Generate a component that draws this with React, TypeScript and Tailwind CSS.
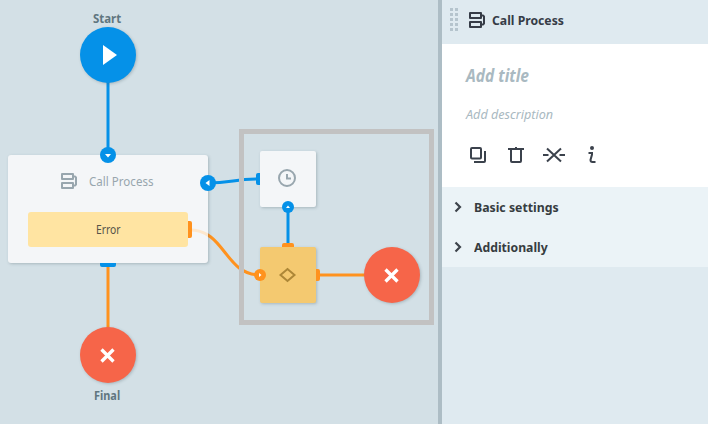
import type { ReactNode } from "react";

const font = "font-['Noto_Sans','Open_Sans',sans-serif]";

function ProcessIcon() {
  return (
    <svg width="16" height="16" viewBox="0 0 16 16" fill="none" stroke="currentColor" strokeWidth="2" strokeLinejoin="round" className="block shrink-0">
      <rect x="1" y="1" width="11" height="5" />
      <rect x="1" y="10" width="11" height="5" />
      <path d="M12 3.4h2l1 1v7.200l-1 1h-2" />
    </svg>
  );
}

function Cross() {
  return (
    <svg width="16" height="16" viewBox="0 0 16 16" className="block -translate-x-[0.500px] translate-y-[0.500px]">
      <path d="M2 2l12 12M14 2L2 14" stroke="#fff" strokeWidth="3.3" />
    </svg>
  );
}

function FinalNode({ place }: { place: string }) {
  return (
    <div className={`absolute flex h-14 w-14 items-center justify-center rounded-full bg-[#f66549] shadow-[1px_1px_3px_rgba(70,90,100,0.3)] ${place}`}>
      <Cross />
    </div>
  );
}

function Canvas() {
  return (
    <main className="relative h-full w-[438px] shrink-0 overflow-hidden bg-[#d3e0e6]">
      <svg width="438" height="424" className="absolute inset-0" fill="none" strokeWidth="3">
        <path d="M108 80V150M207 183C232 183 234 179 258 179M288 207V247" stroke="#0591e8" />
        <path d="M108 264V330M190 230C225 230 225 275 260 275M316 275H366" stroke="#ff921e" />
      </svg>
      <div className="absolute left-[239px] top-[129px] h-[196px] w-[195px] border-5 border-[#c2c2c2]" />

      <span className="absolute left-[93px] top-[9px] origin-left scale-x-[0.88] text-[13px] leading-[18px] font-bold text-[#60767f]">Start</span>
      <div className="absolute left-20 top-[27px] flex h-14 w-14 items-center justify-center rounded-full bg-[#0591e8] shadow-[1px_1px_3px_rgba(70,90,100,0.3)]">
        <svg width="56" height="56"><path d="M23 18v20l14-10z" fill="#fff" /></svg>
      </div>

      <section className="absolute left-2 top-[155px] flex h-[108px] w-[200px] flex-col rounded-[3px] bg-[#f4f6f8] px-5 shadow-[1px_1px_3px_rgba(70,90,100,0.3)]">
        <div className="flex h-[57px] items-start pl-[33px] pt-[18px] text-[#98a6ae]">
          <ProcessIcon />
          <span className="ml-[12px] origin-left scale-x-[0.89] text-[13px] leading-[17px] whitespace-nowrap">Call Process</span>
        </div>
        <div className="flex h-[35px] items-center justify-center rounded-[3px] bg-[#ffe4a2] text-[#555349]">
          <span className="scale-x-[0.86] text-[12px]">Error</span>
        </div>
      </section>

      <div className="absolute left-[260px] top-[151px] flex h-14 w-14 items-center justify-center rounded-[2px] bg-[#f4f6f8] shadow-[1px_1px_3px_rgba(70,90,100,0.3)]">
        <svg width="18" height="18" fill="none" stroke="#98a6ae" strokeWidth="2" className="-translate-x-[1px] -translate-y-[1px]"><circle cx="9" cy="9" r="8" /><path d="M9 5v4.500h4" /></svg>
      </div>
      <div className="absolute left-[260px] top-[247px] flex h-14 w-14 items-center justify-center rounded-[2px] bg-[#f4c970] shadow-[1px_1px_3px_rgba(70,90,100,0.3)]">
        <svg width="18" height="16" fill="none" stroke="#ad8737" strokeWidth="2" className="-translate-x-[0.500px]"><path d="M2 8l7-6 7 6-7 6z" /></svg>
      </div>
      <FinalNode place="left-[364px] top-[247px]" />
      <FinalNode place="left-20 top-[327px]" />
      <span className="absolute left-[94px] top-[386px] origin-left scale-x-[0.84] text-[13px] leading-[18px] font-bold text-[#60767f]">Final</span>

      <svg width="438" height="424" className="absolute inset-0">
        <clipPath id="card"><path d="M190 212h18v50h-18z" /></clipPath>
        <path d="M190 230C225 230 225 275 260 275" fill="none" stroke="#fde7cd" strokeWidth="3" clipPath="url(#card)" />
        <g fill="#0591e8">
          <circle cx="108" cy="155" r="8" />
          <circle cx="208" cy="183" r="8" />
          <circle cx="288" cy="207" r="6" />
          <path d="M100 263h16v2q0 2-2 2h-12q-2 0-2-2z" />
          <path d="M260 173h-2q-2 0-2 2v8q0 2 2 2h2z" />
        </g>
        <g fill="#ff921e">
          <path d="M188 221h2q2 0 2 2v13q0 2-2 2h-2zM316 269h2q2 0 2 2v8q0 2-2 2h-2zM282 247v-2q0-2 2-2h8q2 0 2 2v2z" />
          <circle cx="260" cy="275" r="6" />
        </g>
        <path d="M105 154h6l-3 3.500zM209.500 180v6l-4-3zM286 208h4l-2-2.500zM259 273v4l2.500-2z" fill="#fff" />
      </svg>
    </main>
  );
}

function Action({ children }: { children: ReactNode }) {
  return (
    <button className="flex h-6 w-[38px] items-center justify-center">
      <svg width="24" height="24" fill="none" stroke="#3b424c" strokeWidth="2">{children}</svg>
    </button>
  );
}

function Setting({ title, scale }: { title: string; scale: string }) {
  return (
    <div className="flex h-10 items-center pl-3 text-[#363c40]">
      <svg width="8" height="12" className="block" fill="none" stroke="#3e444b" strokeWidth="2.2"><path d="M1.500 1.500L6 6l-4.500 4.500" /></svg>
      <span className={`ml-3 mt-px origin-left text-[13px] font-bold whitespace-nowrap ${scale}`}>{title}</span>
    </div>
  );
}

function SidePanel() {
  return (
    <aside className="min-w-0 flex-1 border-l-4 border-[#adbdc5] bg-[#dfeaf0]">
      <header className="flex h-11 items-start pl-2 text-[#363c47]">
        <div className="mt-2 grid grid-cols-2 gap-[2px]">
          {Array.from({ length: 10 }, (_, i) => <i key={i} className="h-[3px] w-[3px] bg-[#b5c4cd]" />)}
        </div>
        <div className="ml-[11px] mt-3"><ProcessIcon /></div>
        <span className="ml-[7px] mt-[11px] origin-left scale-x-[0.94] text-[13px] leading-[18px] font-bold whitespace-nowrap">Call Process</span>
      </header>
      <div className="flex h-[143px] flex-col bg-white text-[#a9b9c1]">
        <span className="ml-6 mt-[20px] w-max origin-left scale-x-[0.915] text-[17px] leading-6 font-bold italic">Add title</span>
        <span className="ml-6 mt-[16px] w-max origin-left scale-x-[0.97] text-[13px] leading-5 italic">Add description</span>
        <div className="ml-[17px] mt-[19px] flex">
          <Action><rect x="5" y="5" width="10" height="10.500" rx="1" /><path d="M19 8v10q0 1-1 1H8" /></Action>
          <Action><path d="M4 6h16M12 4v2M7 6v12q0 1 1 1h8q1 0 1-1V6" /></Action>
          <Action><path d="M5 5.500l14 13M19 5.500l-14 13M1 12h5.500M17.500 12h5.500" /></Action>
          <Action><circle cx="12" cy="5" r="2" fill="#3b424c" stroke="none" /><path d="M8.500 10h3.500v1.500l-1.500 5.500q0 2 2 2h3" /></Action>
        </div>
      </div>
      <div className="bg-[#ebf3f7]">
        <Setting title="Basic settings" scale="scale-x-[0.945]" />
        <Setting title="Additionally" scale="scale-x-[0.94]" />
      </div>
    </aside>
  );
}

export default function App() {
  return (
    <div className={`flex h-[424px] w-[708px] overflow-hidden ${font}`}>
      <Canvas />
      <SidePanel />
    </div>
  );
}
